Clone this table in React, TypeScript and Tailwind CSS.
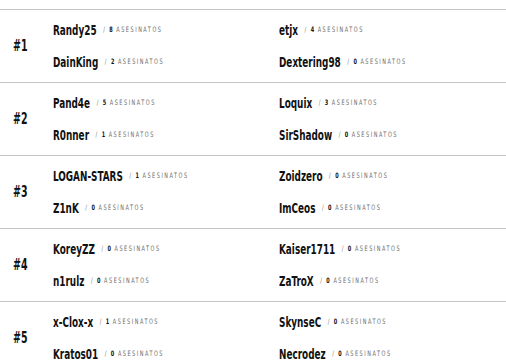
import React from "react";

type P = { name: string; kills: number };
const rows: { rank: number; players: P[] }[] = [
  { rank: 1, players: [{ name: "Randy25", kills: 8 }, { name: "etjx", kills: 4 }, { name: "DainKing", kills: 2 }, { name: "Dextering98", kills: 0 }] },
  { rank: 2, players: [{ name: "Pand4e", kills: 5 }, { name: "Loquix", kills: 3 }, { name: "R0nner", kills: 1 }, { name: "SirShadow", kills: 0 }] },
  { rank: 3, players: [{ name: "LOGAN-STARS", kills: 1 }, { name: "Zoidzero", kills: 0 }, { name: "Z1nK", kills: 0 }, { name: "ImCeos", kills: 0 }] },
  { rank: 4, players: [{ name: "KoreyZZ", kills: 0 }, { name: "Kaiser1711", kills: 0 }, { name: "n1rulz", kills: 0 }, { name: "ZaTroX", kills: 0 }] },
  { rank: 5, players: [{ name: "x-Clox-x", kills: 1 }, { name: "SkynseC", kills: 0 }, { name: "Kratos01", kills: 0 }, { name: "Necrodez", kills: 0 }] },
];

const font = { fontFamily: '"DejaVu Sans Condensed", "DejaVu Sans", sans-serif' };

function Player({ p }: { p: P }) {
  return (
    <div className="flex h-8 items-center whitespace-nowrap">
      <div className="flex origin-left scale-x-[0.73] items-center">
        <span className="text-[13.5px] font-bold text-[#111]">{p.name}</span>
        <span className="ml-[9px] text-[7.5px] text-[#777]">/</span>
        <span className="ml-[6px] text-[7.5px] font-bold text-[#111]">{p.kills}</span>
        <span className="ml-[5px] text-[7.5px] tracking-[2.1px] text-[#6a6a6a]">ASESINATOS</span>
      </div>
    </div>
  );
}

export default function App() {
  return (
    <div className="h-[360px] w-[506px] overflow-hidden bg-white pt-[9px]" style={font}>
      {rows.map((r) => (
        <div key={r.rank} className="flex h-[73px] border-t border-[#c4c4c4] py-1">
          <div className="flex w-[53px] items-center pl-[13px]">
            <span className="origin-left scale-x-[0.7] text-[15px] font-bold text-[#111]">#{r.rank}</span>
          </div>
          <div className="grid flex-1 grid-cols-[226px_1fr]">
            {r.players.map((p) => (
              <Player key={p.name} p={p} />
            ))}
          </div>
        </div>
      ))}
    </div>
  );
}
